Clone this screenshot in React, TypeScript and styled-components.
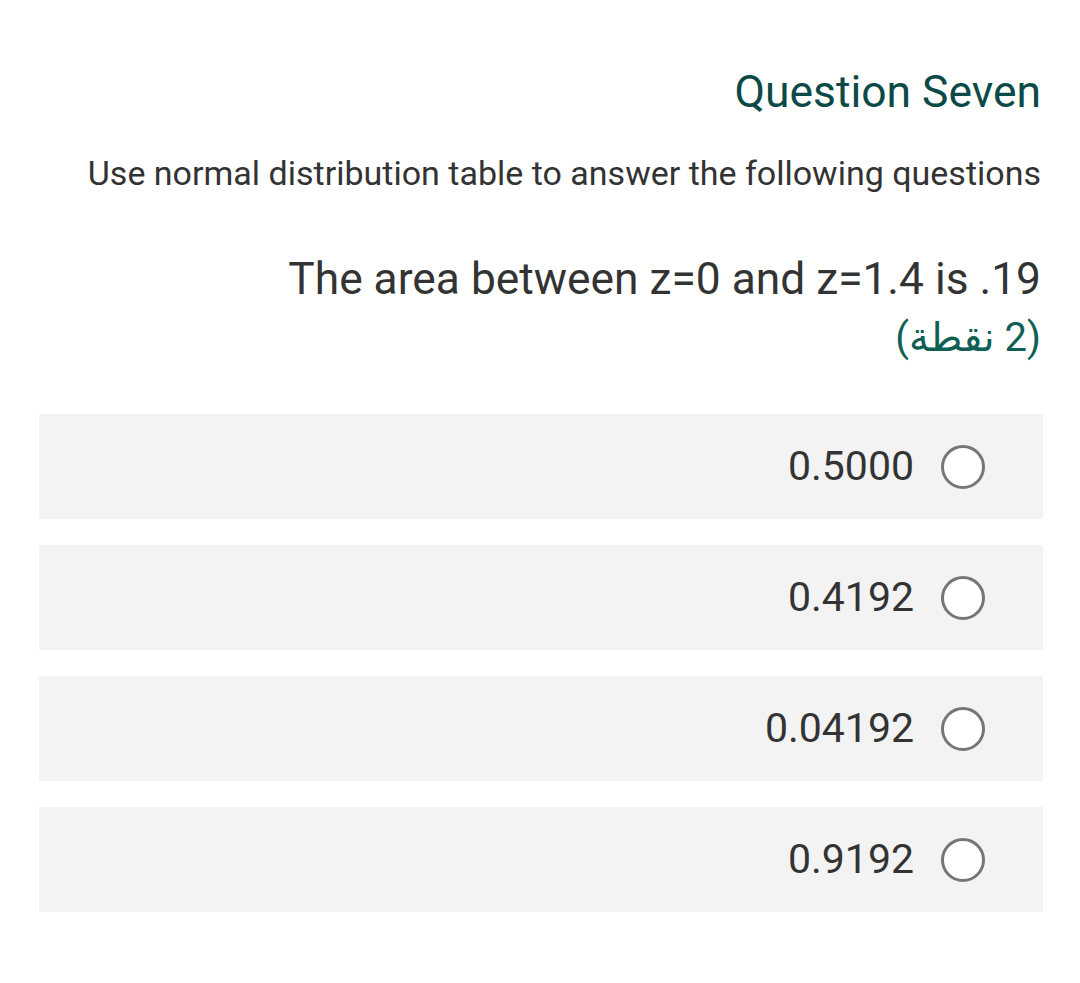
import React from "react";
import styled, { createGlobalStyle } from "styled-components";

const Global = createGlobalStyle`
  html, body { margin: 0; padding: 0; background: #ffffff; }
  body { font-family: Roboto, "DejaVu Sans", "Noto Sans", sans-serif; }
`;

const Page = styled.div`
  direction: rtl;
  padding: 66px 37px 60px 39px;
  display: flex;
  flex-direction: column;
`;

const Title = styled.h1`
  margin: 0 2px 0 0;
  font-size: 44.4px;
  line-height: 53px;
  font-weight: 400;
  color: #0b4a46;
`;

const Subtitle = styled.p`
  margin: 34px 2px 0 0;
  font-size: 34px;
  line-height: 40px;
  color: #333333;
`;

const Question = styled.div`
  margin: 60px 2px 0 0;
  font-size: 44.3px;
  line-height: 53px;
  color: #333333;
`;

const Points = styled.div`
  margin: 8px 2px 0 0;
  font-size: 40px;
  line-height: 48px;
  color: #0f5f55;
`;

const Options = styled.div`
  margin-top: 52px;
  display: flex;
  flex-direction: column;
  gap: 26px;
`;

const OptionRow = styled.label`
  height: 105px;
  background: #f3f3f3;
  display: flex;
  align-items: center;
  gap: 27px;
  padding-right: 58px;
  box-sizing: border-box;
`;

const Radio = styled.span`
  width: 44px;
  height: 44px;
  border-radius: 50%;
  border: 3px solid #767676;
  background: #ffffff;
  box-sizing: border-box;
  flex: none;
`;

const OptionText = styled.span`
  font-size: 41px;
  color: #333333;
  line-height: 1;
`;

const options = ["0.5000", "0.4192", "0.04192", "0.9192"];

export default function App() {
  return (
    <>
      <Global />
      <Page dir="rtl">
        <Title>Question Seven</Title>
        <Subtitle>Use normal distribution table to answer the following questions</Subtitle>
        <Question>The area between z=0 and z=1.4 is .19</Question>
        <Points>(2 نقطة)</Points>
        <Options>
          {options.map((o) => (
            <OptionRow key={o}>
              <Radio />
              <OptionText>{o}</OptionText>
            </OptionRow>
          ))}
        </Options>
      </Page>
    </>
  );
}
